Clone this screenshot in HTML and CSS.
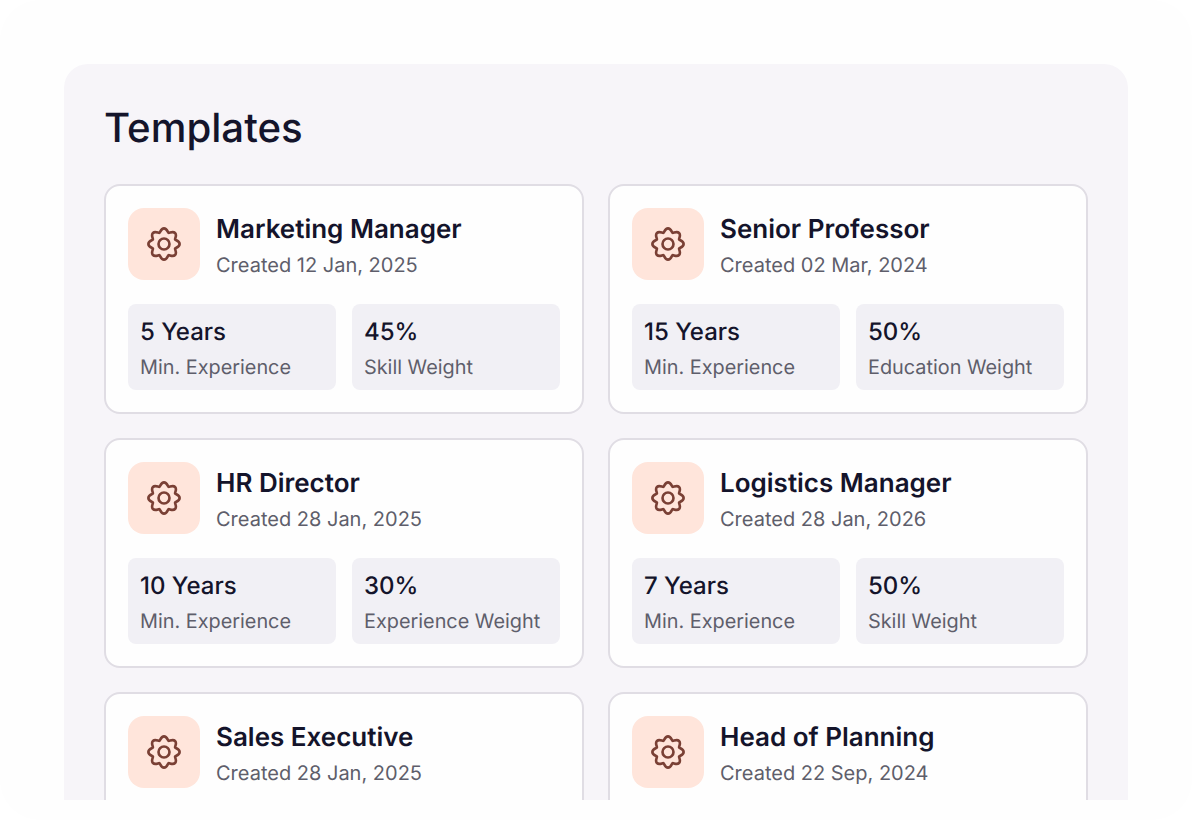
FILE: index.html
```html
<!DOCTYPE html>
<html lang="en">
  <head>
    <meta charset="UTF-8" />
    <meta name="viewport" content="width=device-width, initial-scale=1.0" />
    <title>Templates</title>
    <link rel="stylesheet" href="styles.css">
  </head>

  <body>
    <svg class="defs" width="0" height="0">
      <symbol id="gear" viewBox="-18 -18 36 36">
        <path d="M0 -14.8C3 -14.8 3.53 -10.87 4.36 -10.53C5.19 -10.19 8.35 -12.59 10.47 -10.47C12.59 -8.35 10.19 -5.19 10.53 -4.36C10.87 -3.53 14.8 -3 14.8 0C14.8 3 10.87 3.53 10.53 4.36C10.19 5.19 12.59 8.35 10.47 10.47C8.35 12.59 5.19 10.19 4.36 10.53C3.53 10.87 3 14.8 0 14.8C-3 14.8 -3.53 10.87 -4.36 10.53C-5.19 10.19 -8.35 12.59 -10.47 10.47C-12.59 8.35 -10.19 5.19 -10.53 4.36C-10.87 3.53 -14.8 3 -14.8 0C-14.8 -3 -10.87 -3.53 -10.53 -4.36C-10.19 -5.19 -12.59 -8.35 -10.47 -10.47C-8.35 -12.59 -5.19 -10.19 -4.36 -10.53C-3.53 -10.87 -3 -14.8 0 -14.8Z" />
        <circle cx="0" cy="0" r="5.2" />
      </symbol>
    </svg>

    <div class="frame">
      <main class="panel">
        <h1 class="heading">Templates</h1>

        <div class="grid">
          <div class="card">
            <div class="card-top">
              <div class="icon-box"><svg class="gear"><use href="#gear" /></svg></div>
              <div class="card-text">
                <h2 class="card-title">Marketing Manager</h2>
                <p class="card-date">Created 12 Jan, 2025</p>
              </div>
            </div>
            <div class="stats">
              <div class="stat"><p class="stat-value">5 Years</p><p class="stat-label">Min. Experience</p></div>
              <div class="stat"><p class="stat-value">45%</p><p class="stat-label">Skill Weight</p></div>
            </div>
          </div>

          <div class="card">
            <div class="card-top">
              <div class="icon-box"><svg class="gear"><use href="#gear" /></svg></div>
              <div class="card-text">
                <h2 class="card-title">Senior Professor</h2>
                <p class="card-date">Created 02 Mar, 2024</p>
              </div>
            </div>
            <div class="stats">
              <div class="stat"><p class="stat-value">15 Years</p><p class="stat-label">Min. Experience</p></div>
              <div class="stat"><p class="stat-value">50%</p><p class="stat-label">Education Weight</p></div>
            </div>
          </div>

          <div class="card">
            <div class="card-top">
              <div class="icon-box"><svg class="gear"><use href="#gear" /></svg></div>
              <div class="card-text">
                <h2 class="card-title">HR Director</h2>
                <p class="card-date">Created 28 Jan, 2025</p>
              </div>
            </div>
            <div class="stats">
              <div class="stat"><p class="stat-value">10 Years</p><p class="stat-label">Min. Experience</p></div>
              <div class="stat"><p class="stat-value">30%</p><p class="stat-label">Experience Weight</p></div>
            </div>
          </div>

          <div class="card">
            <div class="card-top">
              <div class="icon-box"><svg class="gear"><use href="#gear" /></svg></div>
              <div class="card-text">
                <h2 class="card-title">Logistics Manager</h2>
                <p class="card-date">Created 28 Jan, 2026</p>
              </div>
            </div>
            <div class="stats">
              <div class="stat"><p class="stat-value">7 Years</p><p class="stat-label">Min. Experience</p></div>
              <div class="stat"><p class="stat-value">50%</p><p class="stat-label">Skill Weight</p></div>
            </div>
          </div>

          <div class="card">
            <div class="card-top">
              <div class="icon-box"><svg class="gear"><use href="#gear" /></svg></div>
              <div class="card-text">
                <h2 class="card-title">Sales Executive</h2>
                <p class="card-date">Created 28 Jan, 2025</p>
              </div>
            </div>
          </div>

          <div class="card">
            <div class="card-top">
              <div class="icon-box"><svg class="gear"><use href="#gear" /></svg></div>
              <div class="card-text">
                <h2 class="card-title">Head of Planning</h2>
                <p class="card-date">Created 22 Sep, 2024</p>
              </div>
            </div>
          </div>
        </div>
      </main>
    </div>
  </body>
</html>
```

FILE: styles.css
```css
* {
  box-sizing: border-box;
  font-family: Inter, "Noto Sans", sans-serif;
  text-rendering: geometricPrecision;
}

html,
body {
  margin: 0;
  height: 820px;
  overflow: hidden;
  background-color: #ffffff;
}

.defs {
  display: block;
}

.frame {
  height: 820px;
  padding: 64px 64px 20px;
  background-color: #fefefe;
  border-radius: 40px;
}

.panel {
  height: 736px;
  padding: 40px 40px 0;
  overflow: hidden;
  background-color: #f7f5f9;
  border-radius: 24px 24px 0 0;
}

.heading {
  margin: 0 0 32px;
  font-size: 40.2px;
  line-height: 48px;
  font-weight: 500;
  color: #14142b;
}

.grid {
  display: grid;
  grid-template-columns: 480px 480px;
  grid-auto-rows: 230px;
  gap: 24px;
}

.card {
  padding: 22px;
  background-color: #fefefe;
  border: 2px solid #e0dde4;
  border-radius: 16px;
}

.card-top {
  display: flex;
  gap: 16px;
  height: 72px;
}

.card-text {
  padding-top: 6px;
}

.icon-box {
  display: flex;
  align-items: center;
  justify-content: center;
  width: 72px;
  height: 72px;
  flex-shrink: 0;
  background-color: #ffe5db;
  border-radius: 16px;
}

.gear {
  width: 38px;
  height: 38px;
  fill: none;
  stroke: #7a4035;
  stroke-width: 2.5;
}

.card-title {
  margin: 0 0 3px;
  font-size: 26px;
  line-height: 32px;
  font-weight: 600;
  color: #14142b;
}

.card-date {
  margin: 0;
  font-size: 20px;
  line-height: 32px;
  color: #5e5e6b;
}

.stats {
  display: grid;
  grid-template-columns: 1fr 1fr;
  gap: 16px;
  margin-top: 24px;
}

.stat {
  height: 86px;
  padding: 12px;
  background-color: #f1f0f5;
  border-radius: 8px;
}

.stat-value {
  margin: 0 0 4px;
  font-size: 24px;
  line-height: 32px;
  font-weight: 500;
  color: #14142b;
}

.stat-label {
  margin: 0;
  font-size: 19.85px;
  line-height: 30px;
  color: #5e5e6b;
}
```
